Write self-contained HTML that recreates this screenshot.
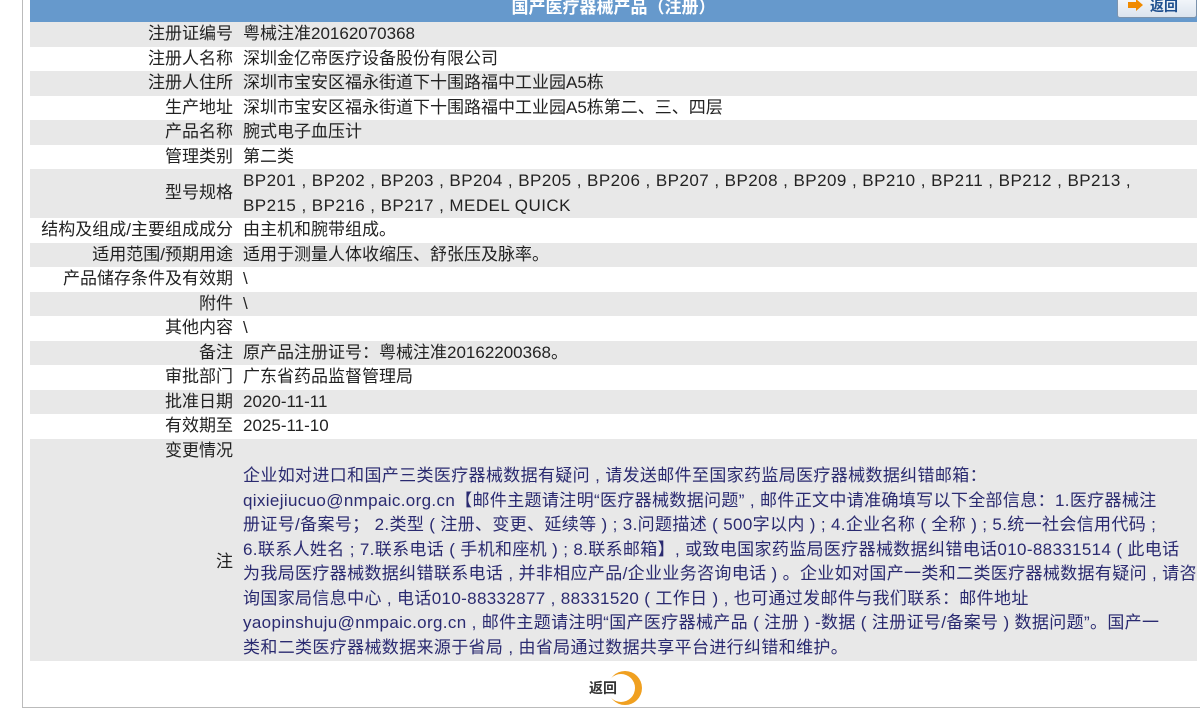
<!DOCTYPE html>
<html><head><meta charset="utf-8"><style>
body{margin:0;width:1200px;height:709px;overflow:hidden;background:#fff;font-family:"Liberation Sans","Noto Sans CJK SC",sans-serif;font-size:17px;color:#222;}
.box{position:absolute;left:22px;top:-2px;width:1190px;height:709px;border-left:1px solid #bbb;border-bottom:1px solid #bbb;}
.hdr{position:absolute;left:30px;top:0;width:1167px;height:22px;background:#6699cc;color:#fff;font-weight:bold;font-size:17px;text-align:center;line-height:16px;}
.btn{position:absolute;left:1117px;top:-3px;width:78px;height:19px;background:linear-gradient(#f4f7fb,#dbe4ee);border:1px solid #7c93ad;border-radius:3px;font-weight:bold;color:#1e4f8f;font-size:14px;line-height:17px;}
.btn i{position:absolute;left:10px;top:4px;width:8px;height:6px;background:#f08a00;}
.btn b{position:absolute;left:18px;top:1px;border-left:7px solid #f08a00;border-top:6px solid transparent;border-bottom:6px solid transparent;}
.btn span{position:absolute;left:32px;top:0}
table{position:absolute;left:30px;top:22px;width:1167px;border-collapse:collapse;}
td{padding:0;height:24.5px;line-height:24.5px;vertical-align:middle;white-space:nowrap;}
td.l{width:203px;text-align:right;padding-right:10px;}
td.v{padding-left:0;}
tr.g td{background:#e8e8e8;}
.note{color:#2a2a70;letter-spacing:0.35px;}
.mod{letter-spacing:0.45px;}
.ret{position:absolute;left:587px;top:671px;}
</style></head><body>
<div class="box"></div>
<div class="hdr">国产医疗器械产品（注册）</div>
<div class="btn"><i></i><b></b><span>返回</span></div>
<table>
<tr class="g"><td class="l">注册证编号</td><td class="v">粤械注准20162070368</td></tr>
<tr><td class="l">注册人名称</td><td class="v">深圳金亿帝医疗设备股份有限公司</td></tr>
<tr class="g"><td class="l">注册人住所</td><td class="v">深圳市宝安区福永街道下十围路福中工业园A5栋</td></tr>
<tr><td class="l">生产地址</td><td class="v">深圳市宝安区福永街道下十围路福中工业园A5栋第二、三、四层</td></tr>
<tr class="g"><td class="l">产品名称</td><td class="v">腕式电子血压计</td></tr>
<tr><td class="l">管理类别</td><td class="v">第二类</td></tr>
<tr class="g"><td class="l" style="height:49px">型号规格</td><td class="v mod">BP201 , BP202 , BP203 , BP204 , BP205 , BP206 , BP207 , BP208 , BP209 , BP210 , BP211 , BP212 , BP213 ,<br>BP215 , BP216 , BP217 , MEDEL QUICK</td></tr>
<tr><td class="l">结构及组成/主要组成成分</td><td class="v">由主机和腕带组成。</td></tr>
<tr class="g"><td class="l">适用范围/预期用途</td><td class="v">适用于测量人体收缩压、舒张压及脉率。</td></tr>
<tr><td class="l">产品储存条件及有效期</td><td class="v">\</td></tr>
<tr class="g"><td class="l">附件</td><td class="v">\</td></tr>
<tr><td class="l">其他内容</td><td class="v">\</td></tr>
<tr class="g"><td class="l">备注</td><td class="v">原产品注册证号：粤械注准20162200368。</td></tr>
<tr><td class="l">审批部门</td><td class="v">广东省药品监督管理局</td></tr>
<tr class="g"><td class="l">批准日期</td><td class="v">2020-11-11</td></tr>
<tr><td class="l">有效期至</td><td class="v">2025-11-10</td></tr>
<tr class="g"><td class="l">变更情况</td><td class="v"></td></tr>
<tr class="g"><td class="l" style="height:198px">注</td><td class="v note">企业如对进口和国产三类医疗器械数据有疑问 , 请发送邮件至国家药监局医疗器械数据纠错邮箱：<br>qixiejiucuo@nmpaic.org.cn【邮件主题请注明“医疗器械数据问题” , 邮件正文中请准确填写以下全部信息：1.医疗器械注<br>册证号/备案号； 2.类型 ( 注册、变更、延续等 ) ; 3.问题描述 ( 500字以内 ) ; 4.企业名称 ( 全称 ) ; 5.统一社会信用代码 ;<br>6.联系人姓名 ; 7.联系电话 ( 手机和座机 ) ; 8.联系邮箱】, 或致电国家药监局医疗器械数据纠错电话010-88331514 ( 此电话<br>为我局医疗器械数据纠错联系电话 , 并非相应产品/企业业务咨询电话 ) 。企业如对国产一类和二类医疗器械数据有疑问 , 请咨<br>询国家局信息中心 , 电话010-88332877 , 88331520 ( 工作日 ) , 也可通过发邮件与我们联系：邮件地址<br>yaopinshuju@nmpaic.org.cn , 邮件主题请注明“国产医疗器械产品 ( 注册 ) -数据 ( 注册证号/备案号 ) 数据问题”。国产一<br>类和二类医疗器械数据来源于省局 , 由省局通过数据共享平台进行纠错和维护。</td></tr>
</table>
<svg class="ret" width="60" height="38" viewBox="0 0 60 38"><circle cx="38" cy="17" r="17" fill="#f0a020"/><circle cx="34" cy="17" r="14" fill="#fff"/><text x="2" y="22" font-size="14" font-weight="bold" fill="#333" font-family="Liberation Sans,Noto Sans CJK SC,sans-serif">返回</text></svg>
</body></html>
